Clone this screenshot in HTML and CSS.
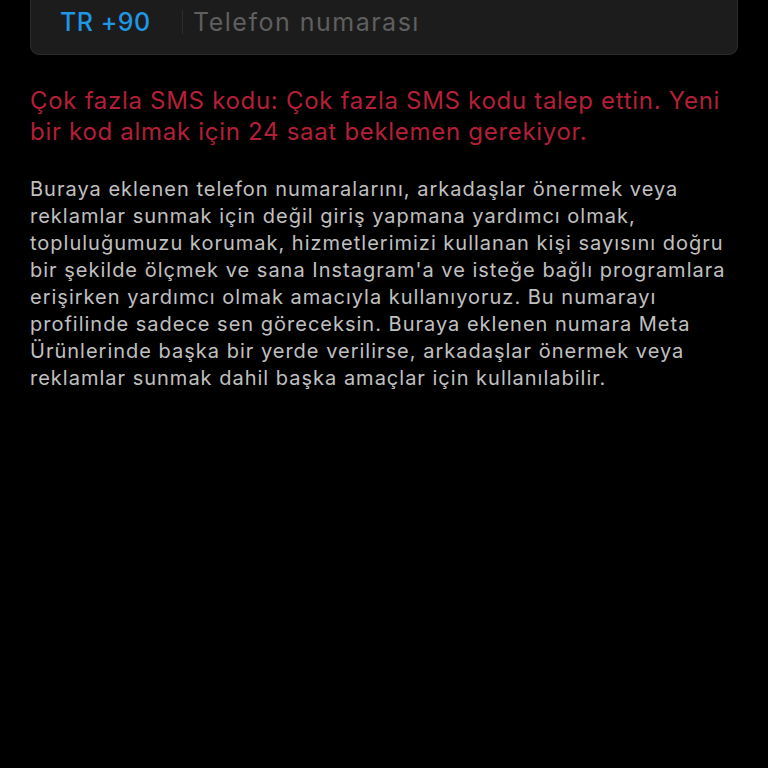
FILE: index.html
```html
<!DOCTYPE html>
<html lang="tr">
<head>
    <meta charset="UTF-8">
    <meta name="viewport" content="width=device-width, initial-scale=1.0">
    <title>Telefon numarası</title>
    <link rel="stylesheet" href="styles.css">
</head>
<body>

<div class="page">
    <div class="phone-field">
        <span class="country-code">TR +90</span>
        <span class="divider"></span>
        <input type="tel" class="phone-input" placeholder="Telefon numarası">
    </div>

    <p class="error-text">Çok fazla SMS kodu: Çok fazla SMS kodu talep ettin. Yeni bir kod almak için 24 saat beklemen gerekiyor.</p>

    <p class="info-text">Buraya eklenen telefon numaralarını, arkadaşlar önermek veya reklamlar sunmak için değil giriş yapmana yardımcı olmak, topluluğumuzu korumak, hizmetlerimizi kullanan kişi sayısını doğru bir şekilde ölçmek ve sana Instagram'a ve isteğe bağlı programlara erişirken yardımcı olmak amacıyla kullanıyoruz. Bu numarayı profilinde sadece sen göreceksin. Buraya eklenen numara Meta Ürünlerinde başka bir yerde verilirse, arkadaşlar önermek veya reklamlar sunmak dahil başka amaçlar için kullanılabilir.</p>
</div>

</body>
</html>
```

FILE: styles.css
```css
html, body {
    background-color: #000;
}
body {
    font-family: Inter, "Noto Sans", sans-serif;
    margin: 0;
    padding: 0 30px;
    overflow: hidden;
}
.page {
    width: 708px;
}
.phone-field {
    display: flex;
    align-items: center;
    height: 67px;
    margin-top: -12px;
    padding-left: 29px;
    background-color: #1c1c1c;
    border: 1px solid #2b2b2b;
    border-radius: 9px;
    box-sizing: border-box;
}
.country-code {
    color: #2196e3;
    font-size: 25px;
    font-weight: 500;
    letter-spacing: 0.02em;
    width: 122px;
}
.divider {
    width: 1px;
    height: 24px;
    background-color: #2e2e2e;
    margin-right: 10px;
}
.phone-input {
    flex: 1;
    background: transparent;
    border: none;
    outline: none;
    font-family: inherit;
    font-size: 25px;
    letter-spacing: 0.06em;
    color: #ddd;
    padding: 0;
}
.phone-input::placeholder {
    color: #5f5f5f;
}
.error-text {
    color: #b41f38;
    font-size: 24px;
    line-height: 31px;
    letter-spacing: 0.7px;
    margin: 30px 0 0;
}
.info-text {
    color: #c0c0c0;
    font-size: 20px;
    line-height: 27px;
    letter-spacing: 1px;
    margin: 29px 0 0;
}
```
